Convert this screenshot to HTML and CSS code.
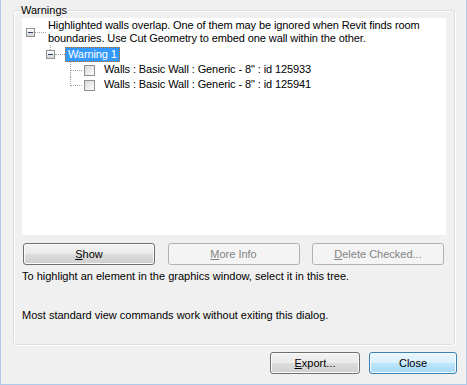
FILE: index.html
```html
<!DOCTYPE html>
<html>
<head>
<meta charset="utf-8">
<link rel="stylesheet" href="styles.css">
</head>
<body>
<div class="window">
  <fieldset class="group">
    <legend>Warnings</legend>
    <div class="tree">
      <div class="node root">
        <span class="exp"></span><span class="hl"></span>
        <span class="label">Highlighted walls overlap. One of them may be ignored when Revit finds room<br>boundaries. Use Cut Geometry to embed one wall within the other.</span>
      </div>
      <div class="node warn">
        <span class="expcol"><span class="vl"></span><span class="exp"></span></span><span class="hl hl2"></span><span class="sel">Warning 1</span>
      </div>
      <div class="node child tee">
        <span class="conn"><span class="hl3"></span></span><span class="chk"></span><span class="ctext">Walls : Basic Wall : Generic - 8" : id 125933</span>
      </div>
      <div class="node child last">
        <span class="conn"></span><span class="chk"></span><span class="ctext">Walls : Basic Wall : Generic - 8" : id 125941</span>
      </div>
    </div>
    <div class="btnrow">
      <button class="btn"><u>S</u>how</button>
      <button class="btn" disabled><u>M</u>ore Info</button>
      <button class="btn" disabled><u>D</u>elete Checked...</button>
    </div>
    <p class="hint">To highlight an element in the graphics window, select it in this tree.</p>
    <p class="hint hint2">Most standard view commands work without exiting this dialog.</p>
  </fieldset>
  <div class="footer">
    <button class="btn export"><u>E</u>xport...</button>
    <button class="btn close">Close</button>
  </div>
</div>
</body>
</html>
```
FILE: styles.css
```css
* { box-sizing: border-box; }
html, body { margin: 0; padding: 0; }
body {
  background: #f0f0f0;
  font: 11px "Liberation Sans", Arial, sans-serif;
  color: #000;
}
.window {
  width: 467px;
  height: 385px;
  border: 1px solid #aecbea;
  border-top: none;
  display: flex;
  flex-direction: column;
}
.group {
  margin: 3px 11px 0 12px;
  padding: 1px 8px 22px 8px;
  border: 1px solid #d5dfe5;
  border-radius: 3px;
  box-shadow: 1px 1px 0 #fff, inset 1px 1px 0 #fff;
  min-width: 0;
}
.group legend {
  margin-left: -2px;
  padding: 0 1px;
  line-height: 14px;
  background: #f0f0f0;
  color: #000;
}
.tree {
  height: 217px;
  background: #fff;
  padding-top: 1px;
  letter-spacing: -0.1px;
}
.node { display: flex; align-items: flex-start; white-space: nowrap; }
.exp {
  display: block;
  width: 9px;
  height: 9px;
  border: 1px solid #919191;
  background:
    linear-gradient(#2b3f73, #2b3f73) center / 5px 1px no-repeat,
    linear-gradient(#ffffff, #d4d4d4);
}
.hl {
  display: block;
  width: 11px;
  height: 0;
  border-top: 1px dotted #a0a0a0;
}
.root { height: 26px; padding-left: 4px; }
.root .exp { margin-top: 9px; }
.root .hl { margin-top: 13px; }
.root .label { margin-left: 2px; line-height: 13px; }
.warn { height: 17px; padding-left: 24px; }
.expcol { display: flex; flex-direction: column; width: 9px; }
.vl { display: block; height: 5px; width: 0; margin-left: 4px; border-left: 1px dotted #a0a0a0; }
.hl2 { width: 10px; margin-top: 9px; }
.sel {
  margin-top: 2px;
  height: 15px;
  line-height: 13px;
  padding: 0 2px;
  background: #3399ff;
  color: #fff;
  border: 1px dotted #c46a1c;
}
.child { height: 15px; padding-left: 48px; }
.conn {
  display: block;
  width: 12px;
  align-self: stretch;
  border-left: 1px dotted #a0a0a0;
}
.hl3 {
  display: block;
  width: 11px;
  height: 0;
  margin-top: 8px;
  border-top: 1px dotted #a0a0a0;
}
.last .conn {
  align-self: flex-start;
  height: 9px;
  border-bottom: 1px dotted #a0a0a0;
}
.chk {
  display: block;
  width: 11px;
  height: 11px;
  margin: 3px 0 0 2px;
  border: 1px solid #8e8f8f;
  background: linear-gradient(135deg, #d8d8d8, #ffffff);
}
.ctext { margin-left: 9px; line-height: 15px; }
.btnrow {
  display: flex;
  justify-content: space-between;
  margin: 8px 2px 0 1px;
}
.btn {
  width: 132px;
  height: 22px;
  padding: 0;
  border: 1px solid #707070;
  border-radius: 3px;
  background: linear-gradient(#f2f2f2 0%, #ebebeb 50%, #dddddd 50%, #cfcfcf 100%);
  box-shadow: inset 0 0 0 1px #fbfbfb;
  font: 11px "Liberation Sans", Arial, sans-serif;
  color: #000;
}
.btn:disabled {
  border-color: #adb2b5;
  background: #f4f4f4;
  box-shadow: none;
  color: #838383;
}
.hint { margin: 5px 0 0 0; line-height: 13px; }
.hint2 { margin-top: 26px; }
.footer {
  display: flex;
  justify-content: flex-end;
  gap: 9px;
  margin: 7px 9px 0 0;
}
.export { width: 90px; }
.close {
  width: 88px;
  border-color: #3c7fb1;
  background: linear-gradient(#eaf6fd 0%, #d9f0fc 50%, #bee6fd 50%, #a7d9f5 100%);
  box-shadow: inset 0 0 0 1px #f4fbfe;
}
```
